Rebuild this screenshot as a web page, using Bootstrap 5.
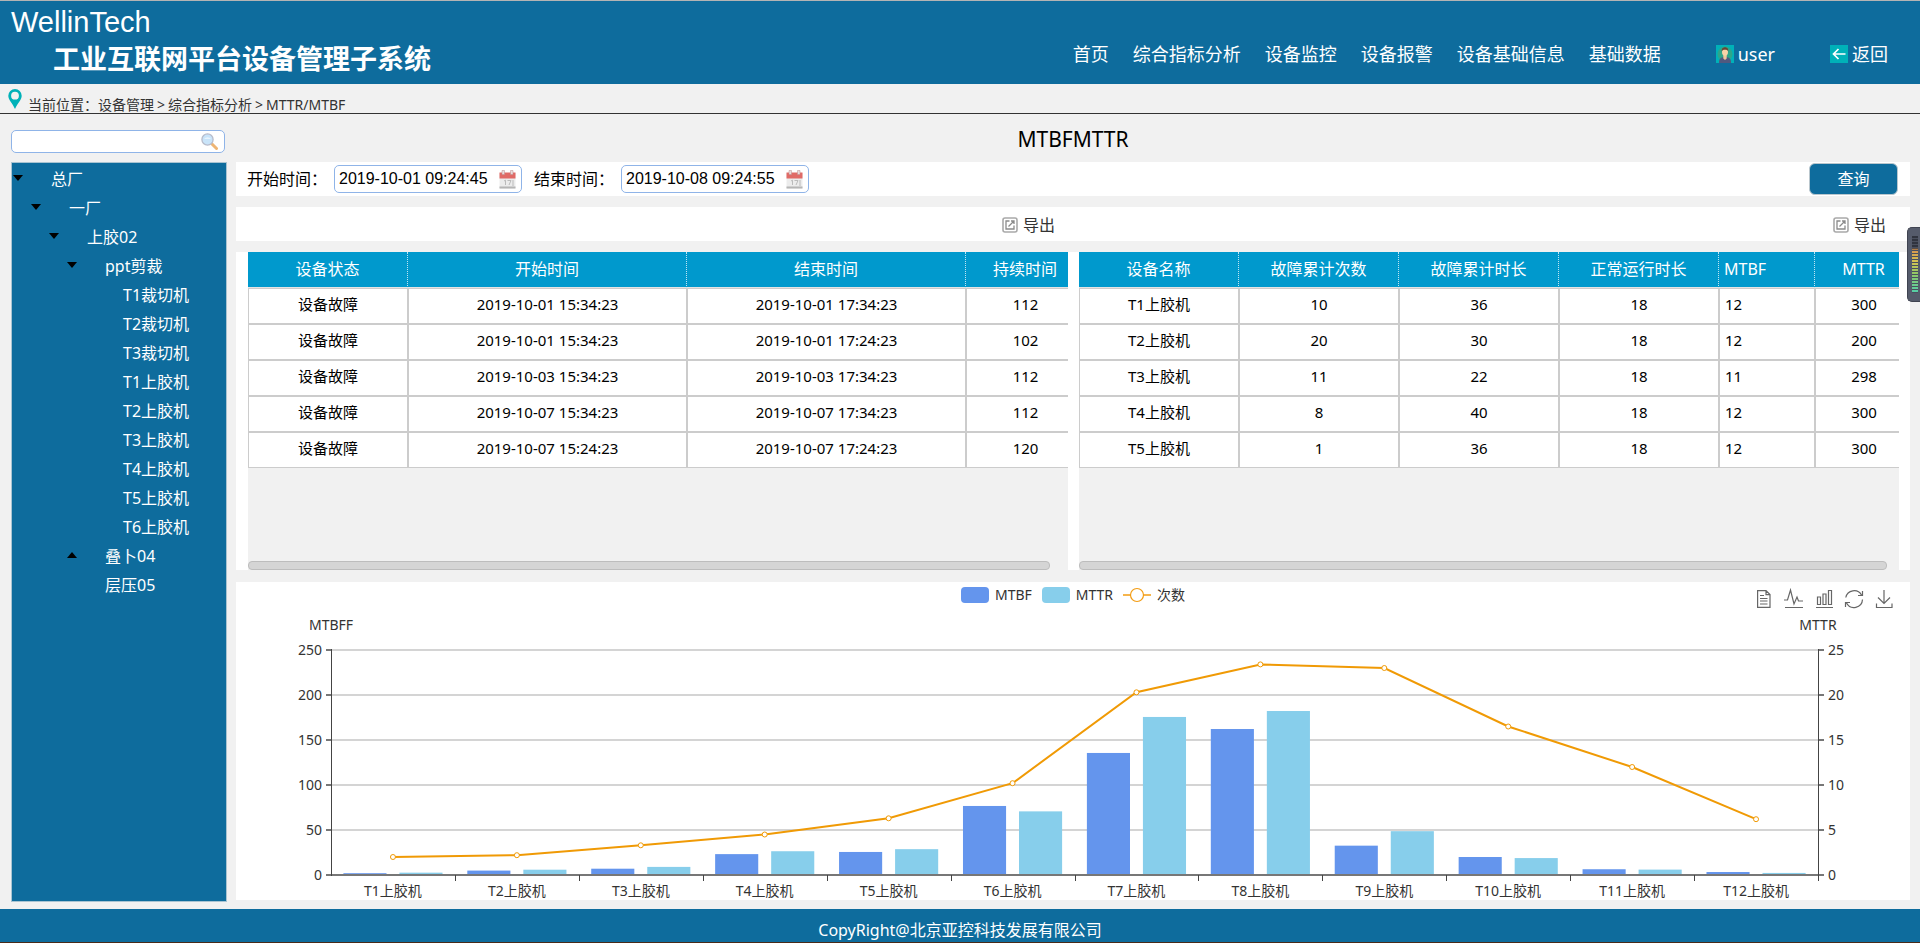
<!DOCTYPE html>
<html lang="zh-CN">
<head>
<meta charset="utf-8">
<meta name="viewport" content="width=device-width, initial-scale=1">
<title>工业互联网平台设备管理子系统</title>
<link href="https://cdn.jsdelivr.net/npm/bootstrap@5.3.0/dist/css/bootstrap.min.css" rel="stylesheet">
<style>
  :root { --brand: #0e6c9d; --page: #f1f1f1; --line: #8fb4e8; --cell: #ccc; --accent: #0099cd; }
  body { font-family: "Noto Sans", "Noto Sans CJK SC", sans-serif; font-size: 16px; color: #000; background: var(--page); }
  a { text-decoration: none; color: inherit; }

  .site-head { height: 84px; background: var(--brand); border-top: 1px solid #b4b4b4; padding: 0 32px 0 11px; }
  .logo-word { font: 29px/34px "Liberation Sans Narrow", "Liberation Sans", sans-serif; }
  .logo-name { font-size: 27px; line-height: 40px; font-weight: 700; padding-left: 42px; }
  .site-nav { gap: 24px; font-size: 18px; line-height: 24px; padding-top: 41px; }
  .site-nav .user-item { margin-left: 31px; }
  .site-nav .back-item { margin-left: 31px; }

  .crumbs { height: 30px; border-bottom: 1px solid #333; padding: 0 8px; font-size: 14px; color: #333; gap: 6px; }
  .crumbs ol { line-height: 20px; padding-top: 11px; gap: 3px; }

  .work { gap: 9px; padding: 0 10px 7px 11px; }
  .side { width: 216px; padding-top: 16px; }
  .content { min-width: 0; }
  .search-box, .date-box { border: 1px solid var(--line); border-radius: 5px; background: #fff; }
  .search-box { height: 23px; width: 214px; padding-right: 6px; }
  .search-box input, .date-box input { border: 0; outline: 0; background: transparent; width: 0; }
  .search-box svg, .date-box svg { flex-shrink: 0; }
  .tree { background: var(--brand); border: 1px solid #a9c4d2; margin-top: 9px; padding-top: 2px; color: #fff; }
  .tree ul ul { padding-left: 18px; }
  .tree a { height: 29px; line-height: 29px; }
  .tree .slot { width: 39px; padding: 0 0 4px 1px; }

  .page-title { font-size: 21px; line-height: 50px; height: 48px; }
  .bar { background: #fff; height: 34px; margin-bottom: 11px; }
  .query { padding: 0 12px 0 11px; }
  .query label { width: 87px; }
  .date-box { width: 188px; height: 28px; margin-right: 12px; padding: 0 5px 0 4px; }
  .date-box input { font: 16px/24px "Liberation Sans", sans-serif; padding: 0; }
  .btn-query { width: 89px; height: 32px; padding: 0; background: var(--brand); border: 1px solid #b9c6cd; border-radius: 6px; color: #fff; font-size: 16px; }
  .btn-export { border: 0; background: transparent; padding: 2px 0 0; gap: 5px; color: #333; line-height: 34px; }
  .export-left { padding-right: 18px; }
  .export-right { padding-right: 24px; }

  .tables { background: #fff; height: 318px; gap: 11px; padding: 0 11px 0 12px; margin-bottom: 12px; }
  .grid-pane { background: var(--page); overflow: hidden; min-width: 0; flex: 1 1 0; }
  .grid-data { table-layout: fixed; border-collapse: separate; border-spacing: 0; text-align: center; }
  .grid-data th { background: var(--accent); color: #fff; font-weight: 400; font-size: 16px; height: 36px; padding: 0 0 2px; border-right: 1px dotted #bfe5f3; border-bottom: 1px solid #e4e4e4; }
  .grid-data td { background: #fff; height: 36px; font-size: 15px; line-height: 20px; padding: 0 0 4px; border: 1px solid var(--cell); }
  .grid-data .at-left { text-align: left; padding-left: 5px; }
  .w-status { width: 160px; } .w-time { width: 279px; } .w-span { width: 119px; } .w-mtbf { width: 96px; } .w-mttr { width: 98px; }
  .thumb { height: 9px; border-radius: 4px; background: #d5d5d5; border: 1px solid #bdbdbd; }
  .thumb-left { margin-right: 18px; }
  .thumb-right { margin-right: 12px; }

  .chart-card { background: #fff; height: 318px; }
  .chart-head { display: grid; grid-template-columns: 1fr auto 1fr; height: 34px; font-size: 14px; line-height: 18px; color: #333; padding-top: 4px; }
  .legend-list { gap: 10px; }
  .legend-list li { gap: 6px; }
  .swatch { width: 28px; height: 16px; border-radius: 4px; }
  .tools { gap: 10px; padding: 2px 16px 0 0; }
  .tools button { border: 0; background: transparent; padding: 0; width: 20px; height: 22px; line-height: 0; }
  #plot { display: block; width: 100%; height: 284px; font-size: 14px; }

  .site-foot { height: 34px; background: var(--brand); color: #fff; border-bottom: 1px solid #4a2a18; line-height: 42px; }
  .meter { right: 0; top: 227px; width: 13px; height: 75px; background: #555b6b; border: 1px solid #3f4350; border-right: 0; border-radius: 5px 0 0 5px; }
  .meter i { position: absolute; left: 4px; right: 2px; top: 8px; bottom: 8px;
    background: repeating-linear-gradient(transparent 0 2px, #4a4f5d 2px 3px), linear-gradient(#30343f 0 12px, #d9964f 14px, #d3c553 26px, #8fc767 38px, #4fcfae 58px); }
</style>
</head>
<body class="min-vh-100 d-flex flex-column position-relative">

<header class="site-head d-flex justify-content-between text-white">
  <div class="d-flex flex-column pt-1">
    <span class="logo-word">WellinTech</span>
    <span class="logo-name">工业互联网平台设备管理子系统</span>
  </div>
  <nav class="site-nav d-flex align-items-start text-nowrap">
    <a href="#">首页</a>
    <a href="#">综合指标分析</a>
    <a href="#">设备监控</a>
    <a href="#">设备报警</a>
    <a href="#">设备基础信息</a>
    <a href="#">基础数据</a>
    <a href="#" class="user-item d-flex align-items-center gap-1">
      <svg width="18" height="18" viewBox="0 0 18 18" aria-hidden="true"><path fill="#00b1b8" d="M0 0h18v18H0z"/><circle cx="9" cy="9" r="7.5" fill="#2ea58a"/><path d="M3 17c0-4 3-5 6-5s6 1 6 5v1H3z" fill="#50597f"/><path d="M7.300 9h3.400v4.500L9 15l-1.700-1.500z" fill="#f2c79c"/><ellipse cx="9" cy="7" rx="3" ry="3.800" fill="#f8d3a8"/><path d="M5.800 6.500C5.500 3 7.500 2.300 9 2.300s3.500.7 3.200 4.200C11.500 5 10.500 4.800 9 4.800s-2.500.2-3.200 1.700z" fill="#6b4535"/></svg>
      user</a>
    <a href="#" class="back-item d-flex align-items-center gap-1">
      <svg width="18" height="18" viewBox="0 0 18 18" aria-hidden="true"><path fill="#00b1b8" d="M0 0h18v18H0z"/><path d="M8.500 4 3.500 9l5 5M3.500 9h12" fill="none" stroke="#fff" stroke-width="1.700"/></svg>
      返回</a>
  </nav>
</header>

<nav class="crumbs d-flex align-items-start" aria-label="breadcrumb">
  <svg class="mt-1" width="14" height="22" viewBox="0 0 14 22" aria-hidden="true"><path fill="#00b1b8" fill-rule="evenodd" d="M7 1a6.700 6.700 0 0 1 6.700 6.700C13.700 12 9.500 15 7 21 4.500 15 .3 12 .3 7.700A6.700 6.700 0 0 1 7 1zm0 2.800a3.900 3.900 0 1 0 0 7.800 3.900 3.900 0 0 0 0-7.800z"/></svg>
  <ol class="list-unstyled d-flex mb-0">
    <li>当前位置：<a href="#">设备管理</a></li>
    <li>&gt;</li>
    <li><a href="#">综合指标分析</a></li>
    <li>&gt;</li>
    <li>MTTR/MTBF</li>
  </ol>
</nav>

<main class="work flex-grow-1 d-flex">
  <aside class="side d-flex flex-column flex-shrink-0">
    <div class="search-box d-flex align-items-center">
      <input type="search" class="flex-grow-1" aria-label="搜索设备">
      <svg width="17" height="17" viewBox="0 0 17 17" aria-hidden="true"><path d="m10.500 10.500 5 5" stroke="#eeb574" stroke-width="3" stroke-linecap="round"/><circle cx="6.500" cy="6.500" r="5.600" fill="#c9e4f9" stroke="#b7bccb" stroke-width="1.300"/><path d="M3 6a4 3.500 0 0 1 7 0z" fill="#e8f4fd"/></svg>
    </div>
    <nav class="tree flex-grow-1" id="tree" aria-label="设备树"></nav>
  </aside>

  <section class="content flex-grow-1">
    <h1 class="page-title text-center fw-normal mb-0">MTBFMTTR</h1>

    <form class="bar query d-flex align-items-center">
      <label for="from">开始时间：</label>
      <div class="date-box d-flex align-items-center">
        <input type="text" class="flex-grow-1" id="from" value="2019-10-01 09:24:45">
        <svg width="17" height="19" viewBox="0 0 17 19" aria-hidden="true"><use href="#cal"/></svg>
      </div>
      <label for="to">结束时间：</label>
      <div class="date-box d-flex align-items-center">
        <input type="text" class="flex-grow-1" id="to" value="2019-10-08 09:24:55">
        <svg width="17" height="19" viewBox="0 0 17 19" aria-hidden="true"><use href="#cal"/></svg>
      </div>
      <button type="button" class="btn-query ms-auto">查询</button>
    </form>

    <div class="bar d-flex">
      <div class="w-50 d-flex justify-content-end export-left">
        <button type="button" class="btn-export d-flex align-items-center"><svg width="16" height="16" viewBox="0 0 16 16" aria-hidden="true"><use href="#out"/></svg>导出</button>
      </div>
      <div class="w-50 d-flex justify-content-end export-right">
        <button type="button" class="btn-export d-flex align-items-center"><svg width="16" height="16" viewBox="0 0 16 16" aria-hidden="true"><use href="#out"/></svg>导出</button>
      </div>
    </div>

    <div class="tables d-flex">
      <div class="grid-pane d-flex flex-column justify-content-between">
        <table class="grid-data w-100">
          <colgroup><col class="w-status"><col class="w-time"><col class="w-time"><col class="w-span"></colgroup>
          <thead><tr><th>设备状态</th><th>开始时间</th><th>结束时间</th><th>持续时间</th></tr></thead>
          <tbody>
            <tr><td>设备故障</td><td>2019-10-01 15:34:23</td><td>2019-10-01 17:34:23</td><td>112</td></tr>
            <tr><td>设备故障</td><td>2019-10-01 15:34:23</td><td>2019-10-01 17:24:23</td><td>102</td></tr>
            <tr><td>设备故障</td><td>2019-10-03 15:34:23</td><td>2019-10-03 17:34:23</td><td>112</td></tr>
            <tr><td>设备故障</td><td>2019-10-07 15:34:23</td><td>2019-10-07 17:34:23</td><td>112</td></tr>
            <tr><td>设备故障</td><td>2019-10-07 15:24:23</td><td>2019-10-07 17:24:23</td><td>120</td></tr>
          </tbody>
        </table>
        <div class="thumb thumb-left"></div>
      </div>
      <div class="grid-pane d-flex flex-column justify-content-between">
        <table class="grid-data w-100">
          <colgroup><col class="w-status"><col class="w-status"><col class="w-status"><col class="w-status"><col class="w-mtbf"><col class="w-mttr"></colgroup>
          <thead><tr><th>设备名称</th><th>故障累计次数</th><th>故障累计时长</th><th>正常运行时长</th><th class="at-left">MTBF</th><th>MTTR</th></tr></thead>
          <tbody>
            <tr><td>T1上胶机</td><td>10</td><td>36</td><td>18</td><td class="at-left">12</td><td>300</td></tr>
            <tr><td>T2上胶机</td><td>20</td><td>30</td><td>18</td><td class="at-left">12</td><td>200</td></tr>
            <tr><td>T3上胶机</td><td>11</td><td>22</td><td>18</td><td class="at-left">11</td><td>298</td></tr>
            <tr><td>T4上胶机</td><td>8</td><td>40</td><td>18</td><td class="at-left">12</td><td>300</td></tr>
            <tr><td>T5上胶机</td><td>1</td><td>36</td><td>18</td><td class="at-left">12</td><td>300</td></tr>
          </tbody>
        </table>
        <div class="thumb thumb-right"></div>
      </div>
    </div>

    <div class="chart-card">
      <div class="chart-head">
        <span></span>
        <ul class="legend-list list-unstyled d-flex mb-0">
          <li class="d-flex align-items-center align-self-start"><span class="swatch" style="background:#6495ed"></span>MTBF</li>
          <li class="d-flex align-items-center align-self-start"><span class="swatch" style="background:#87ceeb"></span>MTTR</li>
          <li class="d-flex align-items-center align-self-start"><svg width="28" height="16" viewBox="0 0 28 16" aria-hidden="true"><path d="M0 8h28" stroke="#f39c12" stroke-width="1.500"/><circle cx="14" cy="8" r="6.500" fill="#fff" stroke="#f39c12" stroke-width="1.200"/></svg>次数</li>
        </ul>
        <div class="tools d-flex justify-content-end">
          <button type="button" aria-label="数据视图"><svg width="20" height="22" fill="none" stroke="#666" stroke-width="1.200"><path d="M3.600 2.600h8.400l4 4v12.800H3.600zM12 2.600v4h4M6 7.500h4M6 10.500h7.500M6 13h7.500M6 16h7.500"/></svg></button>
          <button type="button" aria-label="折线图"><svg width="20" height="22" fill="none" stroke="#666" stroke-width="1.200"><path d="M0 12h3.500l3-10 3.500 14 3-7 1.500 4H19M1 19.500h18"/></svg></button>
          <button type="button" aria-label="柱状图"><svg width="20" height="22" fill="none" stroke="#666" stroke-width="1.200"><path d="M3.500 9h3v7.500h-3zM9 6h3v10.500H9zM14.500 2.500h3v14h-3zM2 19.500h17"/></svg></button>
          <button type="button" aria-label="还原"><svg width="20" height="22" fill="none" stroke="#666" stroke-width="1.200"><path d="M1.800 9.500A8.500 8.500 0 0 1 17.500 7M18.500 11.500A8.500 8.500 0 0 1 2.500 15M18.500 3v4.500H14M1.500 19v-4.500H6"/></svg></button>
          <button type="button" aria-label="保存为图片"><svg width="20" height="22" fill="none" stroke="#666" stroke-width="1.200"><path d="M10 2v13.500M4 9.500l6 6 6-6M2.500 15.500v4h15.500v-4"/></svg></button>
        </div>
      </div>
      <svg id="plot" role="img" aria-label="MTBF、MTTR 与次数"></svg>
    </div>
  </section>
</main>

<footer class="site-foot text-center overflow-hidden">CopyRight@北京亚控科技发展有限公司</footer>

<div class="meter position-absolute" aria-hidden="true"><i></i></div>

<svg width="0" height="0" class="position-absolute" aria-hidden="true">
  <symbol id="cal" viewBox="0 0 17 19"><path d="M.5 3h16v15.500H.5z" fill="#ececec"/><path d="M.5 2.500h16v6H.5z" fill="#e06a66"/><path d="M3 .5h2.500v4H3zM11.500.5H14v4h-2.500z" fill="#e9dcdc" stroke="#b98f8f" stroke-width=".5"/><path d="M5 11l1.500-.8V15M8.500 10.500h3.500L10 15M14 10v6" fill="none" stroke="#bbb"/><path d="M.5 17.500h16" stroke="#b5b5b5" stroke-width="2"/></symbol>
  <symbol id="out" viewBox="0 0 16 16"><rect x="1" y="1" width="14" height="14" rx="2" fill="#fff" stroke="#a9a9a9" stroke-width="1.600"/><path d="M7.500 4H4v8h8V8.500M6.500 9.500 12 4M9 4h3v3" fill="none" stroke="#8a8a8a" stroke-width="1.300"/></symbol>
</svg>

<script src="https://cdn.jsdelivr.net/npm/bootstrap@5.3.0/dist/js/bootstrap.bundle.min.js"></script>
<script>
  const plants = { t: '总厂', c: [{ t: '一厂', c: [{ t: '上胶02', c: [
    { t: 'ppt剪裁', c: ['T1裁切机', 'T2裁切机', 'T3裁切机', 'T1上胶机', 'T2上胶机', 'T3上胶机', 'T4上胶机', 'T5上胶机', 'T6上胶机'].map(t => ({ t })) },
    { t: '叠卜04', closed: true }, { t: '层压05' }] }] }] };
  const caret = up => `<svg class="d-block" width="10" height="6"><path d="${up ? 'M0 6 5 0l5 6z' : 'M0 0h10L5 6z'}"/></svg>`;
  const branch = n => `<li><a href="#" class="d-flex"><span class="slot d-flex align-items-center">${n.c || n.closed ? caret(n.closed) : ''}</span>${n.t}</a>${n.c ? `<ul class="list-unstyled">${n.c.map(branch).join('')}</ul>` : ''}</li>`;
  document.getElementById('tree').innerHTML = `<ul class="list-unstyled mb-0">${branch(plants)}</ul>`;

  const mtbf = [2, 4.9, 7, 23.2, 25.6, 76.7, 135.6, 162.2, 32.6, 20, 6.4, 3.3];
  const mttr = [2.6, 5.9, 9, 26.4, 28.7, 70.7, 175.6, 182.2, 48.7, 18.8, 6, 2.3];
  const count = [2, 2.2, 3.3, 4.5, 6.3, 10.2, 20.3, 23.4, 23, 16.5, 12, 6.2];

  function draw() {
    const plot = document.getElementById('plot');
    const left = 95, right = plot.clientWidth - 92, top = 34, base = 259;
    const band = (right - left) / 12, bar = band * 0.8 / 2.3;
    const y = v => base - v * (base - top) / 250;
    const text = (x, ty, s, anchor) => `<text x="${x}" y="${ty}" text-anchor="${anchor}" fill="#333">${s}</text>`;
    let out = '';
    for (let v = 0; v <= 250; v += 50) {
      const ly = y(v);
      if (v) out += `<path d="M${left} ${ly}H${right}" stroke="#d4d4d4" stroke-width="2"/>`;
      out += text(left - 9, ly + 5, v, 'end') + text(right + 10, ly + 5, v / 10, 'start');
    }
    mtbf.forEach((v, i) => {
      const x = left + band * i + band * 0.1;
      out += `<rect x="${x}" y="${y(v)}" width="${bar}" height="${base - y(v)}" fill="#6495ed"/>`;
      out += `<rect x="${x + bar * 1.3}" y="${y(mttr[i])}" width="${bar}" height="${base - y(mttr[i])}" fill="#87ceeb"/>`;
      out += text(left + band * (i + 0.5), base + 21, `T${i + 1}上胶机`, 'middle');
    });
    let axes = `M${left} ${base}H${right}`;
    for (let v = 0; v <= 250; v += 50) axes += `M${left - 5} ${y(v)}h5M${right} ${y(v)}h6`;
    out += `<path d="${axes}" stroke="#777" stroke-width="2" fill="none"/>`;
    let posts = `M${left + 0.5} ${top - 1}V${base + 1}M${right + 0.5} ${top - 1}V${base + 1}`;
    for (let i = 1; i <= 12; i++) posts += `M${Math.round(left + band * i) + 0.5} ${base}v6`;
    out += `<path d="${posts}" stroke="#444" fill="none"/>`;
    const pts = count.map((v, i) => [left + band * (i + 0.5), y(v * 10)]);
    out += `<polyline points="${pts.join(' ')}" fill="none" stroke="#f09a05" stroke-width="2"/>`;
    out += pts.map(p => `<circle cx="${p[0]}" cy="${p[1]}" r="2.5" fill="#fff" stroke="#f09a05"/>`).join('');
    out += text(left, 14, 'MTBFF', 'middle') + text(right, 14, 'MTTR', 'middle');
    plot.innerHTML = out;
  }
  draw();
  addEventListener('resize', draw);
</script>
</body>
</html>
